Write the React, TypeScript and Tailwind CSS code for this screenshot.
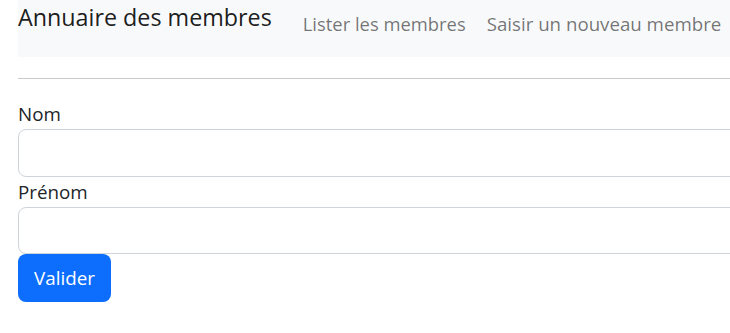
import React from "react";

export default function App() {
  return (
    <div className="w-[730px] h-[333px] overflow-hidden bg-white" style={{ fontFamily: '"Open Sans", "Noto Sans", sans-serif' }}>
      <div className="ml-[18px] w-[760px]">
        <nav className="h-[57px] bg-[#f8f9fa] flex items-start">
          <a className="text-[23.3px] leading-[34px] text-black/90 whitespace-nowrap">Annuaire des membres</a>
          <div className="flex pt-[9px] ml-[31px] gap-[21px]">
            <a className="text-[18.4px] leading-[30px] text-black/55 whitespace-nowrap">Lister les membres</a>
            <a className="text-[18.7px] leading-[30px] text-black/55 whitespace-nowrap">Saisir un nouveau membre</a>
          </div>
        </nav>
        <hr className="mt-[21px] mb-[20px] border-0 border-t border-[#c8c9ca]" />
        <form className="flex flex-col">
          <label className="text-[18.8px] leading-[30px] text-[#212529]">Nom</label>
          <input className="h-[48px] border border-[#ced4da] rounded-[8px] bg-white" />
          <label className="text-[18.8px] leading-[30px] text-[#212529]">Prénom</label>
          <input className="h-[47px] border border-[#ced4da] rounded-[8px] bg-white" />
          <div>
            <button type="button" className="h-[48px] w-[93px] bg-[#0d6efd] text-white rounded-[8px] text-[18.8px] leading-[30px]">Valider</button>
          </div>
        </form>
      </div>
    </div>
  );
}
